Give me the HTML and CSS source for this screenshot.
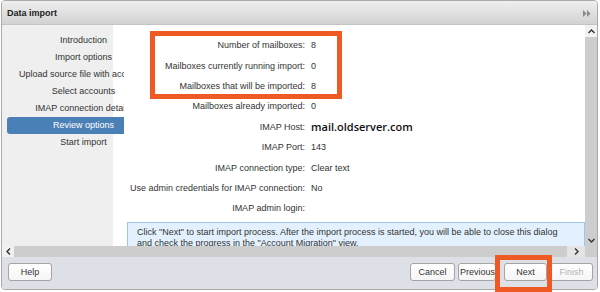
FILE: index.html
```html
<!DOCTYPE html>
<html lang="en">
<head>
    <meta charset="UTF-8" />
    <title>Data import</title>
    <link rel="stylesheet" href="styles.css">
</head>
<body>
    <div class="dialog">
        <div class="titlebar">
            <span class="title">Data import</span>
            <svg class="collapse" width="8" height="7" viewBox="0 0 8 7"><path d="M0 0 L3.5 3.5 L0 7 Z M4 0 L7.5 3.5 L4 7 Z" fill="#8a8a8a"/></svg>
        </div>

        <div class="middle">
            <div class="panes">
                <div class="nav">
                    <ul class="nav-list">
                        <li>Introduction</li>
                        <li>Import options</li>
                        <li>Upload source file with accounts</li>
                        <li>Select accounts</li>
                        <li>IMAP connection details</li>
                        <li class="active">Review options</li>
                        <li>Start import</li>
                    </ul>
                </div>
                <div class="content">
                    <div class="fields">
                        <span class="label">Number of mailboxes:</span><span class="value">8</span>
                        <span class="label">Mailboxes currently running import:</span><span class="value">0</span>
                        <span class="label">Mailboxes that will be imported:</span><span class="value">8</span>
                        <span class="label">Mailboxes already imported:</span><span class="value">0</span>
                        <span class="label">IMAP Host:</span><span class="value host">mail.oldserver.com</span>
                        <span class="label">IMAP Port:</span><span class="value">143</span>
                        <span class="label">IMAP connection type:</span><span class="value">Clear text</span>
                        <span class="label">Use admin credentials for IMAP connection:</span><span class="value">No</span>
                        <span class="label">IMAP admin login:</span><span class="value"></span>
                    </div>
                    <div class="info">
                        Click "Next" to start import process. After the import process is started, you will be able to close this dialog and check the progress in the "Account Migration" view.
                    </div>
                </div>
            </div>

            <div class="vscroll">
                <div class="sb-btn up">
                    <svg width="7" height="5" viewBox="0 0 7 5"><path d="M0.5 4 L3.5 1 L6.5 4" fill="none" stroke="#333" stroke-width="1.4"/></svg>
                </div>
                <div class="sb-track"></div>
                <div class="sb-btn down">
                    <svg width="7" height="5" viewBox="0 0 7 5"><path d="M0.5 1 L3.5 4 L6.5 1" fill="none" stroke="#333" stroke-width="1.4"/></svg>
                </div>
            </div>

            <div class="hscroll">
                <div class="sb-btn left">
                    <svg width="5" height="7" viewBox="0 0 5 7"><path d="M4 0.5 L1 3.5 L4 6.5" fill="none" stroke="#333" stroke-width="1.4"/></svg>
                </div>
                <div class="sb-track"></div>
                <div class="sb-btn right">
                    <svg width="5" height="7" viewBox="0 0 5 7"><path d="M1 0.5 L4 3.5 L1 6.5" fill="none" stroke="#333" stroke-width="1.4"/></svg>
                </div>
            </div>
            <div class="corner"></div>
        </div>

        <div class="footer">
            <button class="btn help">Help</button>
            <div class="actions">
                <button class="btn cancel">Cancel</button>
                <button class="btn previous">Previous</button>
                <button class="btn next">Next</button>
                <button class="btn finish" disabled>Finish</button>
            </div>
        </div>
    </div>

    <!-- annotation boxes drawn over the screenshot -->
    <div class="mark mark-counts"></div>
    <div class="mark mark-next"></div>
</body>
</html>
```

FILE: styles.css
```css
* {
    margin: 0;
    padding: 0;
    box-sizing: border-box;
}

body {
    width: 600px;
    height: 292px;
    background: #ffffff;
    font-family: 'Liberation Sans', Arial, sans-serif;
    font-size: 9px;
    color: #333;
    position: relative;
    overflow: hidden;
}

.dialog {
    margin-left: 1px;
    width: 597px;
    height: 290px;
    border: 1px solid #a9a9a9;
    border-radius: 4px;
    display: flex;
    flex-direction: column;
    overflow: hidden;
}

.titlebar {
    height: 24px;
    flex: none;
    display: flex;
    align-items: center;
    justify-content: space-between;
    padding: 0 6px 0 5px;
    background: linear-gradient(#efefef, #d2d2d2);
    border-bottom: 1px solid #c4c4c4;
}

.title {
    font-weight: bold;
    color: #222;
    font-size: 9px;
}

.collapse {
    margin-top: 1px;
}

/* body of the wizard */
.middle {
    flex: 1;
    display: grid;
    grid-template-columns: 1fr 12px;
    grid-template-rows: 1fr 11px;
    min-height: 0;
}

.panes {
    display: flex;
    min-height: 0;
    overflow: hidden;
}

.nav {
    width: 111px;
    flex: none;
    background: #efefef;
    padding-top: 7px;
    padding-left: 5px;
    position: relative;
    z-index: 1;
}

.nav-list {
    list-style: none;
    width: 117px;
    overflow: hidden;
}

.nav-list li {
    width: 153px;
    height: 17px;
    line-height: 17px;
    text-align: center;
    white-space: nowrap;
    color: #333;
}

.nav-list li.active {
    background: #4b80b6;
    color: #ffffff;
    border-radius: 3px 0 0 3px;
}

.content {
    flex: 1;
    background: #ffffff;
    padding-top: 10px;
}

.fields {
    display: grid;
    grid-template-columns: 192px 1fr;
    column-gap: 6px;
    grid-auto-rows: 20.4px;
    align-items: center;
}

.label {
    text-align: right;
    white-space: nowrap;
}

.value.host {
    font-family: 'Open Sans', sans-serif;
    font-weight: 600;
    font-size: 11px;
    color: #111;
}

.info {
    margin: 3px 0 0 14px;
    padding: 4px 22px 0 9px;
    height: 40px;
    background: #e2f1fd;
    border: 1px solid #9cc6ec;
    line-height: 11px;
    color: #333;
}

/* scrollbars */
.vscroll {
    display: flex;
    flex-direction: column;
    background: #cdcdcd;
    grid-row: 1;
    grid-column: 2;
}

.hscroll {
    display: flex;
    background: #cdcdcd;
    grid-row: 2;
    grid-column: 1;
}

.corner {
    background: #cdcdcd;
}

.sb-btn {
    display: flex;
    align-items: center;
    justify-content: center;
    flex: none;
}

.sb-track {
    flex: 1;
}

.vscroll .sb-btn {
    height: 12px;
}

.vscroll .up {
    background: #f1f1f1;
}

.hscroll .sb-btn {
    width: 12px;
    background: #f1f1f1;
}

.hscroll .right {
    width: 18px;
    background: #e4e4e4;
}

/* footer buttons */
.footer {
    height: 32px;
    flex: none;
    background: #dde0e6;
    display: flex;
    align-items: center;
    justify-content: space-between;
    padding: 0 4px 2px 6px;
}

.actions {
    display: flex;
    gap: 3px;
}

.btn {
    height: 18px;
    background: linear-gradient(#ffffff, #f6f6f6);
    border: 1px solid #a4a4a4;
    border-radius: 3px;
    font-family: 'Liberation Sans', Arial, sans-serif;
    font-size: 9px;
    color: #333;
    white-space: nowrap;
    overflow: hidden;
}

.help {
    width: 44px;
}

.cancel {
    width: 45px;
}

.previous {
    width: 38px;
    padding: 0;
    text-align: left;
    padding-left: 1px;
}

.next {
    width: 43px;
    margin-left: 5px;
}

.finish {
    width: 43px;
    color: #b0b0b0;
}

/* orange annotation frames */
.mark {
    position: absolute;
    border: 5px solid #ef5a24;
}

.mark-counts {
    left: 150px;
    top: 31px;
    width: 192px;
    height: 68px;
}

.mark-next {
    left: 495px;
    top: 255px;
    width: 57px;
    height: 37px;
}
```
